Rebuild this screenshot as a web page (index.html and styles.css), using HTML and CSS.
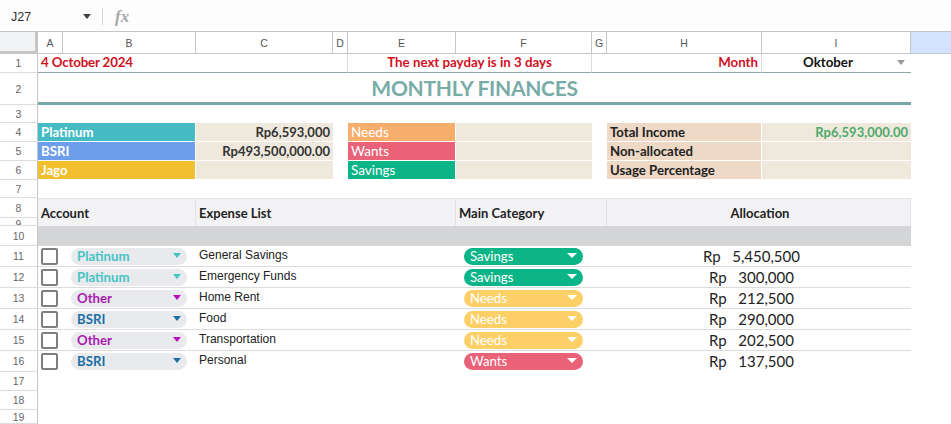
FILE: index.html
```html
<!DOCTYPE html>
<html lang="en">
<head>
  <meta charset="UTF-8" />
  <title>Monthly Finances</title>
  <link rel="stylesheet" href="styles.css">
</head>
<body>

  <div class="formula-bar">
    <div class="name-box">J27</div>
    <span class="caret caret-dark"></span>
    <div class="formula-divider"></div>
    <div class="fx">fx</div>
  </div>

  <div class="sheet">
    <!-- Column headers -->
    <div class="corner"></div>
    <div class="col-head">A</div>
    <div class="col-head">B</div>
    <div class="col-head">C</div>
    <div class="col-head">D</div>
    <div class="col-head">E</div>
    <div class="col-head">F</div>
    <div class="col-head">G</div>
    <div class="col-head">H</div>
    <div class="col-head">I</div>
    <div class="col-head col-selected"></div>

    <!-- Row 1 -->
    <div class="row-head">1</div>
    <div class="top-cell span-3 red date">4 October 2024</div>
    <div class="top-cell line-right"></div>
    <div class="top-cell span-2 red center line-right">The next payday is in 3 days</div>
    <div class="top-cell"></div>
    <div class="top-cell red right line-right">Month</div>
    <div class="top-cell month"><span>Oktober</span><span class="caret caret-gray"></span></div>
    <div></div>

    <!-- Row 2 -->
    <div class="row-head">2</div>
    <div class="title span-9">MONTHLY FINANCES</div>
    <div></div>

    <!-- Row 3 -->
    <div class="row-head">3</div>
    <div class="span-10"></div>

    <!-- Row 4 -->
    <div class="row-head">4</div>
    <div class="label span-2 bg-platinum">Platinum</div>
    <div class="value">Rp6,593,000</div>
    <div></div>
    <div class="label label-plain bg-needs">Needs</div>
    <div class="value"></div>
    <div></div>
    <div class="label label-dark">Total Income</div>
    <div class="value green">Rp6,593,000.00</div>
    <div></div>

    <!-- Row 5 -->
    <div class="row-head">5</div>
    <div class="label span-2 bg-bsri">BSRI</div>
    <div class="value">Rp493,500,000.00</div>
    <div></div>
    <div class="label label-plain bg-wants">Wants</div>
    <div class="value"></div>
    <div></div>
    <div class="label label-dark">Non-allocated</div>
    <div class="value"></div>
    <div></div>

    <!-- Row 6 -->
    <div class="row-head">6</div>
    <div class="label span-2 bg-jago">Jago</div>
    <div class="value"></div>
    <div></div>
    <div class="label label-plain bg-savings">Savings</div>
    <div class="value"></div>
    <div></div>
    <div class="label label-dark">Usage Percentage</div>
    <div class="value"></div>
    <div></div>

    <!-- Row 7 -->
    <div class="row-head">7</div>
    <div class="span-10"></div>

    <!-- Rows 8-9, merged table header -->
    <div class="row-head">8</div>
    <div class="table-head span-2">Account</div>
    <div class="table-head span-3">Expense List</div>
    <div class="table-head span-2">Main Category</div>
    <div class="table-head span-2 center">Allocation</div>
    <div class="filler-tall"></div>
    <div class="row-head row-clip">9</div>

    <!-- Row 10 -->
    <div class="row-head">10</div>
    <div class="band span-9"></div>
    <div></div>

    <!-- Rows 11-16 -->
    <div class="row-head">11</div>
    <div class="item-row span-9">
      <span class="checkbox"></span>
      <div class="pill pill-account text-platinum">Platinum<span class="caret caret-platinum"></span></div>
      <div class="expense">General Savings</div>
      <div class="pill pill-category bg-savings">Savings<span class="caret caret-white"></span></div>
      <div class="amount">Rp   5,450,500</div>
    </div>
    <div></div>

    <div class="row-head">12</div>
    <div class="item-row span-9">
      <span class="checkbox"></span>
      <div class="pill pill-account text-platinum">Platinum<span class="caret caret-platinum"></span></div>
      <div class="expense">Emergency Funds</div>
      <div class="pill pill-category bg-savings">Savings<span class="caret caret-white"></span></div>
      <div class="amount">Rp   300,000</div>
    </div>
    <div></div>

    <div class="row-head">13</div>
    <div class="item-row span-9">
      <span class="checkbox"></span>
      <div class="pill pill-account text-other">Other<span class="caret caret-other"></span></div>
      <div class="expense">Home Rent</div>
      <div class="pill pill-category bg-pill-needs">Needs<span class="caret caret-white"></span></div>
      <div class="amount">Rp   212,500</div>
    </div>
    <div></div>

    <div class="row-head">14</div>
    <div class="item-row span-9">
      <span class="checkbox"></span>
      <div class="pill pill-account text-bsri">BSRI<span class="caret caret-bsri"></span></div>
      <div class="expense">Food</div>
      <div class="pill pill-category bg-pill-needs">Needs<span class="caret caret-white"></span></div>
      <div class="amount">Rp   290,000</div>
    </div>
    <div></div>

    <div class="row-head">15</div>
    <div class="item-row span-9">
      <span class="checkbox"></span>
      <div class="pill pill-account text-other">Other<span class="caret caret-other"></span></div>
      <div class="expense">Transportation</div>
      <div class="pill pill-category bg-pill-needs">Needs<span class="caret caret-white"></span></div>
      <div class="amount">Rp   202,500</div>
    </div>
    <div></div>

    <div class="row-head">16</div>
    <div class="item-row item-row-last span-9">
      <span class="checkbox"></span>
      <div class="pill pill-account text-bsri">BSRI<span class="caret caret-bsri"></span></div>
      <div class="expense">Personal</div>
      <div class="pill pill-category bg-wants">Wants<span class="caret caret-white"></span></div>
      <div class="amount">Rp   137,500</div>
    </div>
    <div></div>

    <!-- Empty rows -->
    <div class="row-head">17</div>
    <div class="span-10"></div>
    <div class="row-head">18</div>
    <div class="span-10"></div>
    <div class="row-head">19</div>
    <div class="span-10"></div>
  </div>

</body>
</html>
```

FILE: styles.css
```css
/* General */
body {
  margin: 0;
  height: 424px;
  overflow: hidden;
  background: white;
  font-family: Lato, "Open Sans", sans-serif;
  color: #222;
}

/* Formula bar */
.formula-bar {
  height: 32px;
  display: flex;
  align-items: center;
  box-sizing: border-box;
  padding-top: 2px;
  border-bottom: 1px solid #c4c7c5;
  background: #fdfdfe;
  font-family: "Liberation Sans", Arial, sans-serif;
}

.name-box {
  width: 72px;
  margin-left: 11px;
  font-size: 12.5px;
  color: #333;
}

.formula-divider {
  width: 1px;
  height: 17px;
  margin-left: 11px;
  background: #d5d7d8;
}

.fx {
  margin-left: 12px;
  font-family: "Liberation Serif", serif;
  font-style: italic;
  font-weight: bold;
  font-size: 17px;
  color: #a8a8a8;
}

/* Triangles */
.caret {
  display: block;
  width: 0;
  height: 0;
  border-left: 4px solid transparent;
  border-right: 4px solid transparent;
  border-top: 5px solid #444;
  margin-left: auto;
}

.caret-dark { margin-left: 0; border-top-color: #444; }
.caret-gray { margin-left: 0; border-top-color: #999; }
.caret-white { border-left-width: 5px; border-right-width: 5px; border-top-color: white; }
.caret-platinum { border-top-color: #45c4c4; }
.caret-other { border-top-color: #b70fbd; }
.caret-bsri { border-top-color: #1c6ea4; }

/* Grid */
.sheet {
  display: grid;
  grid-template-columns: 38px 25px 133px 137px 15px 108px 136px 15px 155px 149px 40px;
  grid-template-rows: 22px 19px 32px 18px 19px 19px 19px 18px 20px 8px 20px 21px 21px 21px 21px 21px 21px 19px 19px 14px;
}

.span-2 { grid-column: span 2; }
.span-3 { grid-column: span 3; }
.span-9 { grid-column: span 9; }
.span-10 { grid-column: span 10; }

.corner {
  box-sizing: border-box;
  background: #f1f3f4;
  border-right: 3px solid #c4c7c5;
  border-bottom: 3px solid #c4c7c5;
}

.col-head {
  display: flex;
  align-items: center;
  justify-content: center;
  box-sizing: border-box;
  border-right: 1px solid #c4c7c5;
  border-bottom: 1px solid #c4c7c5;
  font-family: "Liberation Sans", Arial, sans-serif;
  font-size: 10.5px;
  color: #555;
}

.col-selected {
  background: #d3e3fd;
  border-right: none;
}

.row-head {
  display: flex;
  align-items: center;
  justify-content: center;
  box-sizing: border-box;
  overflow: hidden;
  border-right: 1px solid #c4c7c5;
  border-bottom: 1px solid #dcdcdc;
  font-family: "Liberation Sans", Arial, sans-serif;
  font-size: 10.5px;
  color: #666;
}

.row-clip {
  align-items: flex-start;
}

/* Top row */
.top-cell {
  display: flex;
  align-items: center;
  box-sizing: border-box;
  padding: 0 3px 2px;
  border-bottom: 1px solid #8ba6a8;
  font-size: 13.3px;
  font-weight: bold;
}

.date { letter-spacing: -0.15px; }
.red { color: #d0121f; }
.center { justify-content: center; }
.right { justify-content: flex-end; }
.line-right { border-right: 1px solid #dcdcdc; }

.month {
  justify-content: space-between;
  padding: 0 6px 2px 41px;
  color: #111;
}

.title {
  display: flex;
  align-items: center;
  justify-content: center;
  box-sizing: border-box;
  border-bottom: 3px solid #78a5a6;
  font-size: 21px;
  letter-spacing: -0.3px;
  font-weight: bold;
  color: #78aca7;
}

/* Summary blocks */
.label {
  display: flex;
  align-items: center;
  box-sizing: border-box;
  padding-left: 3px;
  border-right: 1px solid white;
  border-bottom: 1px solid white;
  font-size: 13.2px;
  font-weight: bold;
  color: white;
}

.label-plain {
  font-size: 13.5px;
  font-weight: normal;
}

.label-dark {
  background: #eed9c6;
  color: #222;
}

.value {
  display: flex;
  align-items: center;
  justify-content: flex-end;
  box-sizing: border-box;
  padding-right: 3px;
  border-bottom: 1px solid white;
  background: #efe9dd;
  font-size: 13px;
  font-weight: bold;
  color: #333;
}

.green { color: #4fa86c; }

.bg-platinum { background: #45bcc4; }
.bg-bsri { background: #6d9eeb; }
.bg-jago { background: #f2c02e; }
.bg-needs { background: #f7ae6c; }
.bg-wants { background: #ea6278; }
.bg-savings { background: #0cb587; }
.bg-pill-needs { background: #fdd067; }

/* Table head */
.table-head {
  grid-row: span 2;
  display: flex;
  align-items: center;
  box-sizing: border-box;
  padding-left: 3px;
  background: #f3f3f5;
  border-top: 1px solid #e6e6e6;
  border-right: 1px solid #dfe3e8;
  font-size: 13px;
  font-weight: bold;
  color: #222;
}

.filler-tall {
  grid-row: span 2;
}

.band {
  background: #d4d5d7;
}

/* Item rows */
.item-row {
  display: flex;
  align-items: flex-start;
  box-sizing: border-box;
  padding-top: 2px;
  border-bottom: 1px solid #dcdcdc;
}

.item-row-last {
  border-bottom: none;
}

.checkbox {
  box-sizing: border-box;
  flex: none;
  width: 17px;
  height: 17px;
  margin-left: 3px;
  border: 2px solid #7f7f7f;
  border-radius: 2px;
  background: white;
}

.pill {
  display: flex;
  align-items: center;
  flex: none;
  box-sizing: border-box;
  height: 17px;
  padding: 0 6px 2px;
  border-radius: 9px;
  font-size: 13.2px;
  font-weight: bold;
}

.pill-account {
  width: 116px;
  margin-left: 13px;
  background: #e8eaed;
}

.pill-category {
  width: 119px;
  font-weight: normal;
  color: white;
}

.text-platinum { color: #45c4c4; }
.text-other { color: #aa1ab0; }
.text-bsri { color: #1c6ea4; }

.expense {
  flex: none;
  width: 277px;
  box-sizing: border-box;
  padding-left: 12px;
  line-height: 14px;
  font-family: "Liberation Sans", Arial, sans-serif;
  font-size: 12px;
  color: #222;
}

.amount {
  flex: 1;
  padding-left: 9px;
  line-height: 17px;
  text-align: center;
  white-space: pre;
  font-size: 15px;
}
```
